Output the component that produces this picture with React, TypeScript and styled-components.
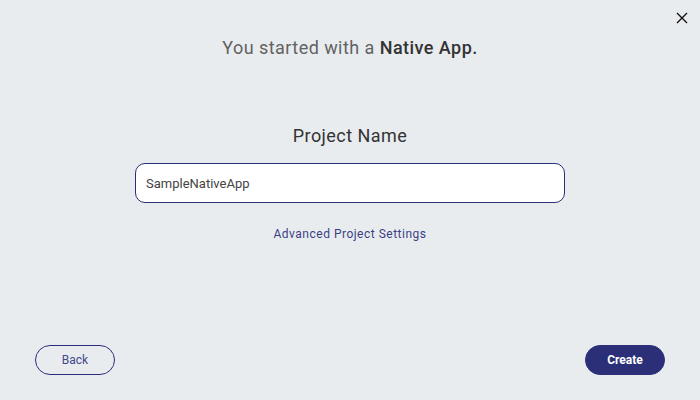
import * as React from 'react';
import styled, { createGlobalStyle } from 'styled-components';

const GlobalStyle = createGlobalStyle`
    html, body {
        margin: 0;
        padding: 0;
        background: #e9ecef;
        font-family: Roboto, "Liberation Sans", sans-serif;
    }
`;

const navy = '#2b2f78';

const Page = styled.div`
    position: relative;
    width: 700px;
    height: 400px;
    display: flex;
    flex-direction: column;
    align-items: center;
    background: #e9ecef;
`;

const CloseButton = styled.button`
    position: absolute;
    top: 10px;
    right: 10px;
    width: 16px;
    height: 16px;
    padding: 0;
    border: none;
    background: transparent;
    display: flex;
    align-items: center;
    justify-content: center;
    cursor: pointer;
`;

const Title = styled.h1`
    margin: 37px 0 0 0;
    font-size: 18px;
    line-height: 22px;
    font-weight: 400;
    color: #626262;
    letter-spacing: 0.45px;

    & b {
        font-weight: 500;
        color: #333;
    }
`;

const Label = styled.label`
    margin-top: 66px;
    font-size: 18px;
    line-height: 22px;
    font-weight: 400;
    color: #333;
    letter-spacing: 0.45px;
`;

const NameInput = styled.input`
    box-sizing: border-box;
    margin-top: 16px;
    width: 430px;
    height: 40px;
    padding: 0 10px;
    border: 1px solid ${navy};
    border-radius: 10px;
    background: #fff;
    font-family: Roboto, "Liberation Sans", sans-serif;
    font-size: 13px;
    letter-spacing: 0;
    color: #444;
    outline: none;
`;

const SettingsLink = styled.a`
    margin-top: 23px;
    font-size: 12px;
    line-height: 16px;
    letter-spacing: 0.5px;
    color: #3b3f85;
    text-decoration: none;
    cursor: pointer;
`;

const Footer = styled.div`
    margin-top: auto;
    width: 100%;
    box-sizing: border-box;
    padding: 0 35px 25px 35px;
    display: flex;
    justify-content: space-between;
`;

const PillButton = styled.button<{ $primary?: boolean }>`
    box-sizing: border-box;
    width: 80px;
    height: 30px;
    border-radius: 15px;
    border: 1px solid ${navy};
    background: ${p => (p.$primary ? navy : 'transparent')};
    color: ${p => (p.$primary ? '#fff' : '#45498a')};
    font-family: Roboto, "Liberation Sans", sans-serif;
    font-size: 12px;
    font-weight: ${p => (p.$primary ? 700 : 400)};
    cursor: pointer;
`;

const App: React.FC = () => (
    <Page>
        <GlobalStyle />
        <CloseButton aria-label="Close">
            <svg width="12" height="12" viewBox="0 0 12 12">
                <path d="M1 1L11 11M11 1L1 11" stroke="#111" strokeWidth="1.4" />
            </svg>
        </CloseButton>
        <Title>
            You started with a <b>Native App.</b>
        </Title>
        <Label htmlFor="project-name">Project Name</Label>
        <NameInput id="project-name" defaultValue="SampleNativeApp" />
        <SettingsLink>Advanced Project Settings</SettingsLink>
        <Footer>
            <PillButton>Back</PillButton>
            <PillButton $primary>Create</PillButton>
        </Footer>
    </Page>
);

export default App;
